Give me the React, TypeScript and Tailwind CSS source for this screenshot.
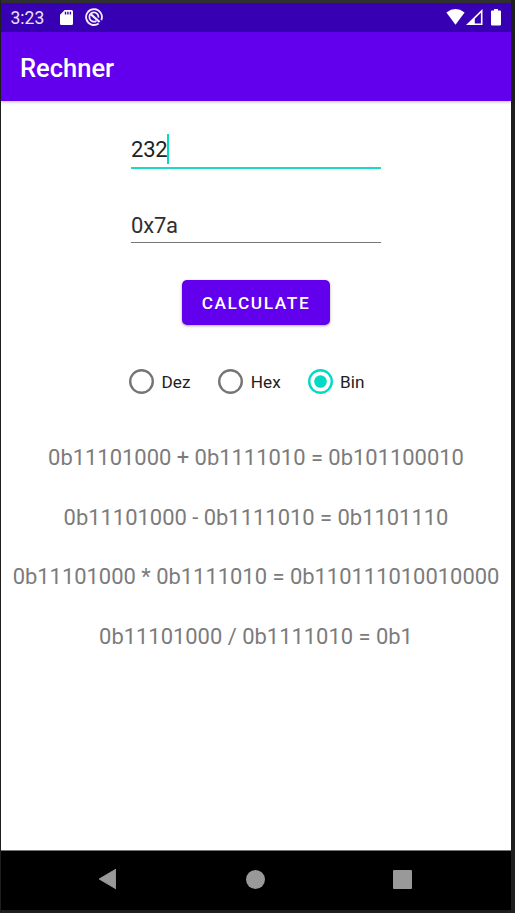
import React, { useState } from "react";

const results = [
  "0b11101000 + 0b1111010 = 0b101100010",
  "0b11101000 - 0b1111010 = 0b1101110",
  "0b11101000 * 0b1111010 = 0b110111010010000",
  "0b11101000 / 0b1111010 = 0b1",
];

const bases = [
  { name: "Dez", width: "w-[89.3px]" },
  { name: "Hex", width: "w-[89.3px]" },
  { name: "Bin", width: "w-[70px]" },
];

function StatusBar() {
  return (
    <div className="flex h-[29px] shrink-0 items-center bg-[#3700b3] pb-px pl-[9.5px] pr-[10px] text-white">
      <span className="w-[49.5px] pt-px text-[17.5px] leading-[26px] text-[#e9e3f7]">3:23</span>
      <svg className="h-[17px] w-[13px]" viewBox="0 0 13 17">
        <path
          fill="#fff"
          fillRule="evenodd"
          d="M4.7 1H11.5Q13 1 13 2.5V14.5Q13 16 11.5 16H1.5Q0 16 0 14.5V5.7ZM4.8 2.8V5.6H6.2V2.8ZM7.2 2.8V5.6H8.6V2.8ZM9.7 2.8V5.6H11.1V2.8Z"
        />
      </svg>
      <svg className="ml-3 h-[18px] w-[18px]" viewBox="0 0 18 18" fill="none" stroke="#f1edfb">
        <path strokeWidth="1.8" d="M13.6 15.5A7.9 7.9 0 1 1 16.3 12.1" />
        <path strokeWidth="1.8" d="M11.4 12.9A4.6 4.6 0 1 1 13.5 9.6" />
        <path strokeWidth="2.3" d="M6 6.4L14.6 14" />
      </svg>
      <div className="ml-auto flex items-center">
        <svg className="h-[18px] w-[19px]" viewBox="0 0 19 18">
          <path fill="#fff" d="M.4 4.5Q9.5-2.3 18.6 4.5L9.5 16.8Z" />
        </svg>
        <svg className="ml-px h-[18px] w-[17px]" viewBox="0 0 17 18">
          <path fill="#fff" fillRule="evenodd" d="M0 17L16.5 1V17ZM8.8 10.8V15.4H14.9V4.7Z" />
        </svg>
        <svg className="ml-2 h-[18px] w-[10px]" viewBox="0 0 10 18">
          <path fill="#fff" d="M3 1H7V2.5H9Q10 2.5 10 3.5V16.4Q10 17.4 9 17.4H1Q0 17.4 0 16.4V3.5Q0 2.5 1 2.5H3Z" />
        </svg>
      </div>
    </div>
  );
}

function Radio({ checked }: { checked: boolean }) {
  return (
    <svg className="h-[25px] w-[25px]" viewBox="0 0 25 25">
      <circle cx="12.5" cy="12.5" r="11.3" fill="none" strokeWidth="2.4" stroke={checked ? "#03dac5" : "#757575"} />
      {checked && <circle cx="12.5" cy="12.5" r="6.3" fill="#03dac5" />}
    </svg>
  );
}

function NavigationBar() {
  return (
    <div className="flex h-[60px] shrink-0 items-center border-t border-[#757575] bg-black pb-[3px] pl-[97px]">
      <svg className="h-[22px] w-[18px]" viewBox="0 0 18 22">
        <path fill="#999" stroke="#999" strokeLinejoin="round" d="M1.2 11L17.9 1.2V20.8Z" />
      </svg>
      <div className="ml-[130px] h-[19px] w-[19px] rounded-full bg-[#999]" />
      <div className="ml-32 h-[19px] w-[19px] rounded-[1px] bg-[#999]" />
    </div>
  );
}

export default function App() {
  const [base, setBase] = useState("Bin");
  return (
    <div className="h-[913px] w-[515px] bg-[#1f1e1e] pl-px pr-1 font-['Roboto',sans-serif]">
      <div className="h-[3px] bg-[#303030]" />
      <div className="flex h-[907px] w-[510px] flex-col bg-white">
        <StatusBar />
        <header className="flex h-[69px] shrink-0 items-center bg-[#6200ee] pl-[19px] pt-1 text-[25.5px] font-medium text-white shadow-[0_1px_3px_rgba(0,0,0,0.28)]">
          Rechner
        </header>
        <main className="flex flex-1 flex-col items-center">
          <div className="mt-[32px] flex h-[36px] w-[250px] items-end border-b-2 border-[#1adac5] text-[22px] leading-[34px] text-[#212121]">
            <span className="tracking-[-0.2px]">232</span>
            <span className="-ml-[0.6px] mb-[3px] h-[30px] w-0.5 bg-[#03dac5]" />
          </div>
          <div className="mt-[38px] flex h-[36px] w-[250px] items-center border-b border-[#767676] pt-0.5 text-[22px] tracking-[-0.2px] text-[#303030]">
            0x7a
          </div>
          <button className="mt-[37px] h-[45px] w-[148px] rounded-[5px] bg-[#6200ee] pt-0.5 text-[17.3px] font-medium tracking-[1.6px] text-white shadow-[0_1px_3px_rgba(0,0,0,0.35)]">
            CALCULATE
          </button>
          <div className="mt-11 flex h-[25px] w-[254px]">
            {bases.map(({ name, width }) => (
              <button key={name} onClick={() => setBase(name)} className={`flex shrink-0 items-center ${width}`}>
                <Radio checked={base === name} />
                <span className="ml-[7.5px] pt-[2px] text-[17.2px] text-[#212121]">{name}</span>
              </button>
            ))}
          </div>
          <div className="mt-[49px] flex flex-col gap-[29.5px]">
            {results.map((line) => (
              <p key={line} className="whitespace-nowrap text-center text-[21.93px] leading-[30px] text-[#7b7b7b]">
                {line}
              </p>
            ))}
          </div>
        </main>
        <NavigationBar />
      </div>
    </div>
  );
}
